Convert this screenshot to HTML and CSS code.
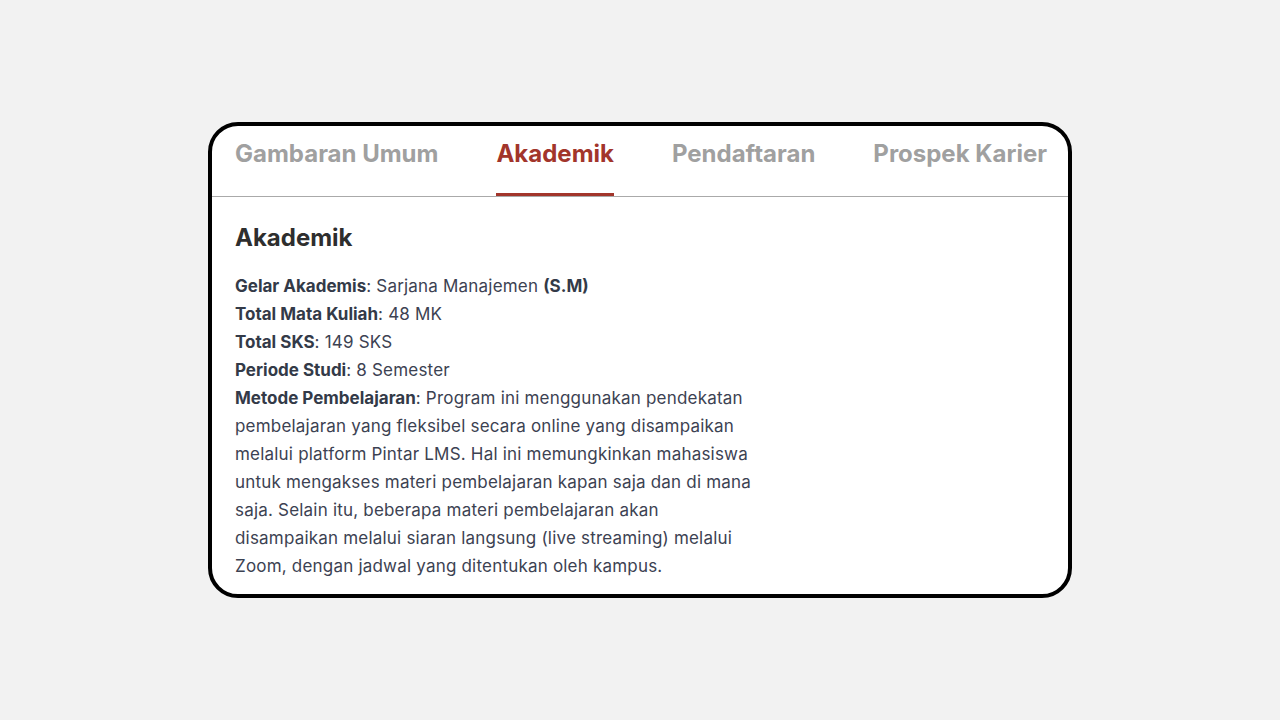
FILE: index.html
```html
<!DOCTYPE html>
<html lang="id">
<head>
<meta charset="utf-8">
<title>Akademik</title>
<link rel="stylesheet" href="styles.css">
</head>
<body>
<main class="page">
  <section class="card">
    <nav class="tabs">
      <a class="tab">Gambaran Umum</a>
      <a class="tab active">Akademik</a>
      <a class="tab">Pendaftaran</a>
      <a class="tab">Prospek Karier</a>
    </nav>
    <div class="content">
      <h2 class="title">Akademik</h2>
      <div class="info">
        <p><strong>Gelar Akademis</strong>: Sarjana Manajemen <strong>(S.M)</strong></p>
        <p><strong>Total Mata Kuliah</strong>: 48 MK</p>
        <p><strong>Total SKS</strong>: 149 SKS</p>
        <p><strong>Periode Studi</strong>: 8 Semester</p>
        <p><strong>Metode Pembelajaran</strong>: Program ini menggunakan pendekatan pembelajaran yang fleksibel secara online yang disampaikan melalui platform Pintar LMS. Hal ini memungkinkan mahasiswa untuk mengakses materi pembelajaran kapan saja dan di mana saja. Selain itu, beberapa materi pembelajaran akan disampaikan melalui siaran langsung (live streaming) melalui Zoom, dengan jadwal yang ditentukan oleh kampus.</p>
      </div>
    </div>
  </section>
</main>
</body>
</html>
```

FILE: styles.css
```css
* { box-sizing: border-box; }
html, body { margin: 0; padding: 0; }
body {
  background: #f2f2f2;
  font-family: "Inter", "Noto Sans", sans-serif;
  width: 1280px;
  height: 720px;
}
.page {
  display: flex;
  justify-content: center;
  padding-top: 122px;
}
.card {
  width: 864px;
  background: #ffffff;
  border: 4px solid #000;
  border-radius: 30px;
  overflow: hidden;
}
.tabs {
  display: flex;
  justify-content: space-between;
  padding: 0 21px 0 23px;
  border-bottom: 1px solid #aaaaaa;
}
.tab {
  display: block;
  height: 70px;
  padding-top: 12px;
  font-size: 24px;
  line-height: 32px;
  font-weight: 700;
  color: #a0a0a0;
  letter-spacing: 0;
  border-bottom: 3px solid transparent;
}
.tab.active {
  color: #a2352b;
  border-bottom-color: #a2352b;
}
.content {
  padding: 25px 23px 14px;
}
.title {
  margin: 0 0 18px;
  font-size: 24px;
  line-height: 32px;
  font-weight: 700;
  color: #2e2e2e;
}
.info {
  max-width: 522px;
  font-size: 17px;
  line-height: 28px;
  letter-spacing: 0.2px;
  color: #3c4252;
}
.info p { margin: 0; }
.info strong { font-weight: 700; color: #333a48; letter-spacing: 0; }
```
